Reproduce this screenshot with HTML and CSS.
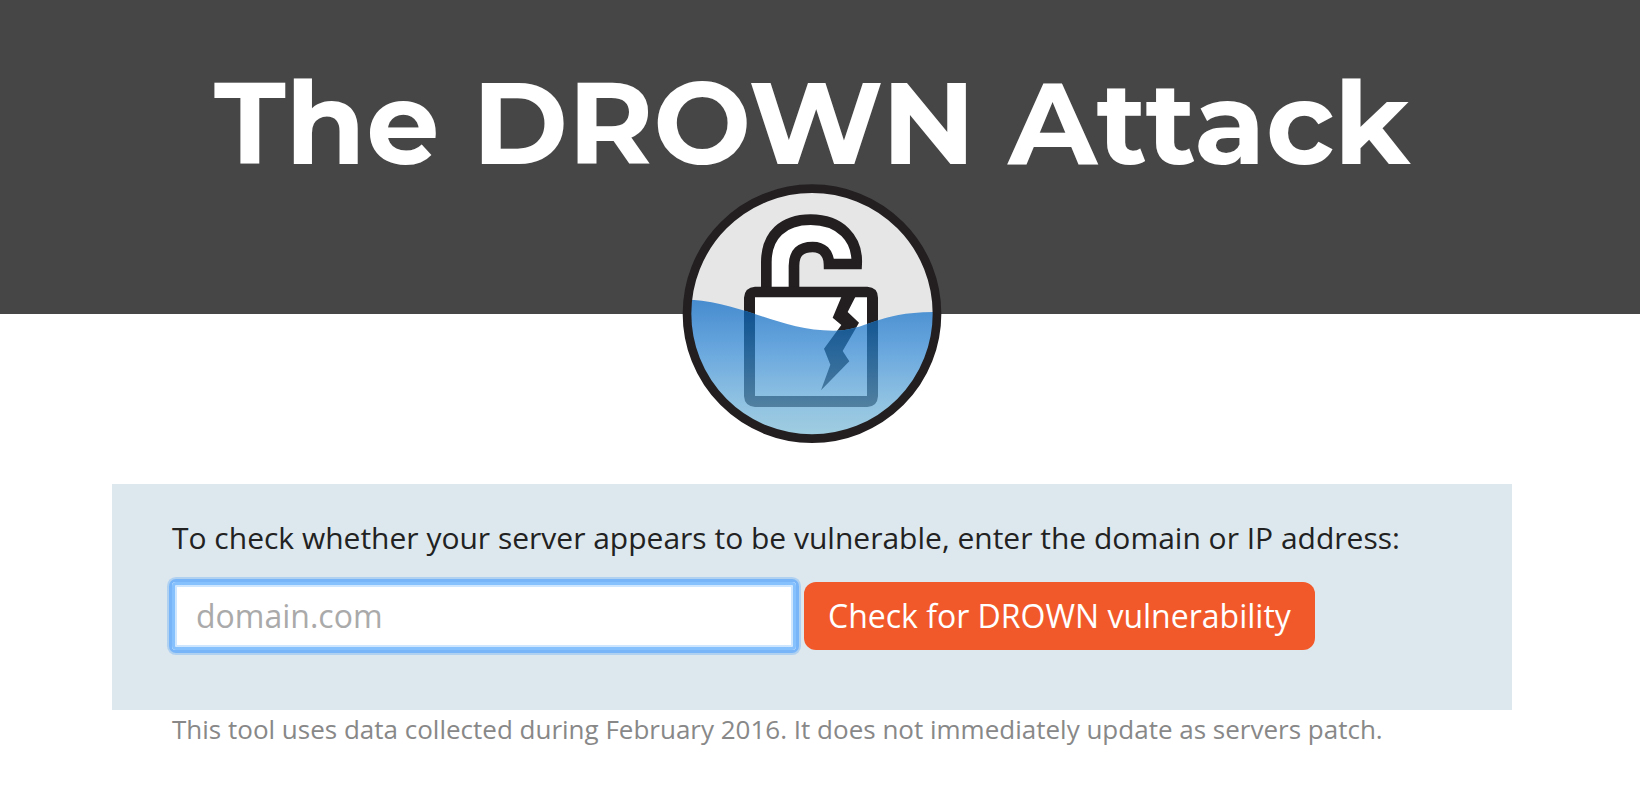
FILE: index.html
```html
<!DOCTYPE html>
<html lang="en">
<head>
    <meta charset="UTF-8">
    <meta name="viewport" content="width=device-width, initial-scale=1.0">
    <title>The DROWN Attack</title>
    <link rel="stylesheet" href="styles.css">
</head>
<body>
    <header>
        <h1>The DROWN Attack</h1>
        <svg class="logo" viewBox="36 27 780 780" role="img" aria-label="DROWN logo">
            <defs>
                <linearGradient id="water" x1="0" y1="374" x2="0" y2="780" gradientUnits="userSpaceOnUse">
                    <stop offset="0" stop-color="#478ccf"/>
                    <stop offset="0.35" stop-color="#66a5dd"/>
                    <stop offset="0.7" stop-color="#8bbfe2"/>
                    <stop offset="1" stop-color="#a0cde0"/>
                </linearGradient>
                <linearGradient id="sunk" x1="0" y1="410" x2="0" y2="696" gradientUnits="userSpaceOnUse">
                    <stop offset="0" stop-color="#115290"/>
                    <stop offset="0.35" stop-color="#246399"/>
                    <stop offset="1" stop-color="#5180a0"/>
                </linearGradient>
                <clipPath id="surface">
                    <path d="M40 374H65C230 386 330 467 490 467C590 467 620 412 789 411H816V807H40Z"/>
                </clipPath>
                <g id="body">
                    <path fill-rule="evenodd" d="M255 335H592Q624 337 624 368V664Q622 695 592 696H255Q224 694 222 664V368Q224 337 255 335ZM255 367V663H591V367Z"/>
                    <path d="M514 366H556L533 411L567 443L518 528L538 559L453 646L481 569L462 521L514 450L488 428Z"/>
                </g>
            </defs>
            <circle cx="426" cy="416" r="375" fill="#e6e6e6"/>
            <path d="M289 345V262C289 180 340 134 422 134C510 134 564 190 560 267H477C476 232 457 216 428 216C392 216 372 233 372 272V345" fill="#fff" stroke="#231f20" stroke-width="32"/>
            <rect x="250" y="362" width="346" height="306" fill="#fff"/>
            <use href="#body" fill="#231f20"/>
            <g clip-path="url(#surface)">
                <circle cx="426" cy="416" r="375" fill="url(#water)"/>
                <use href="#body" fill="url(#sunk)"/>
            </g>
            <circle cx="426" cy="416" r="375" fill="none" stroke="#231f20" stroke-width="26"/>
        </svg>
    </header>
    <main>
        <form class="check">
            <label for="domain">To check whether your server appears to be vulnerable, enter the domain or IP address:</label>
            <div class="controls">
                <input type="text" id="domain" placeholder="domain.com">
                <button type="button">Check for DROWN vulnerability</button>
            </div>
        </form>
        <p class="note">This tool uses data collected during February 2016. It does not immediately update as servers patch.</p>
    </main>
</body>
</html>
```

FILE: styles.css
```css
body {
    margin: 0;
    background: #fff;
    color: #222;
    font-family: "Open Sans", sans-serif;
}
header {
    height: 314px;
    padding-right: 16px;
    background: #464646;
    text-align: center;
}
h1 {
    margin: 0;
    padding-top: 62px;
    color: #fff;
    font-family: Montserrat, Inter, sans-serif;
    font-size: 116px;
    font-weight: 700;
    line-height: 122px;
    white-space: nowrap;
}
/* hangs over the bottom edge of the header */
.logo {
    display: block;
    width: 260px;
    height: 260px;
    margin: 0 auto;
}
main {
    margin-top: 170px;
    padding: 0 128px 0 112px;
}
.check {
    padding: 34px 60px 60px;
    background: #dde8ee;
}
label {
    display: block;
    margin-bottom: 24px;
    font-size: 30px;
    line-height: 40px;
    white-space: nowrap;
}
.controls {
    display: flex;
    gap: 8px;
}
input {
    box-sizing: border-box;
    width: 624px;
    height: 68px;
    padding: 0 24px 2px;
    border: none;
    border-radius: 4px;
    background: #fff;
    font-family: inherit;
    font-size: 32px;
    outline: none;
    box-shadow: inset 0 0 0 3px #86c1fd, inset 0 0 0 5px #cfe6ff, 0 0 0 3px #78b5f8, 0 0 0 5px #b1d1f1;
}
input::placeholder {
    color: #aaa;
}
button {
    height: 68px;
    padding: 0 24px 2px;
    border: none;
    border-radius: 12px;
    background: #f2592a;
    color: #fff;
    font-family: inherit;
    font-size: 32px;
    font-weight: 500;
    white-space: nowrap;
    cursor: pointer;
}
.note {
    margin: 0;
    padding: 0 60px;
    color: #888;
    font-size: 26px;
    line-height: 38px;
}
```
